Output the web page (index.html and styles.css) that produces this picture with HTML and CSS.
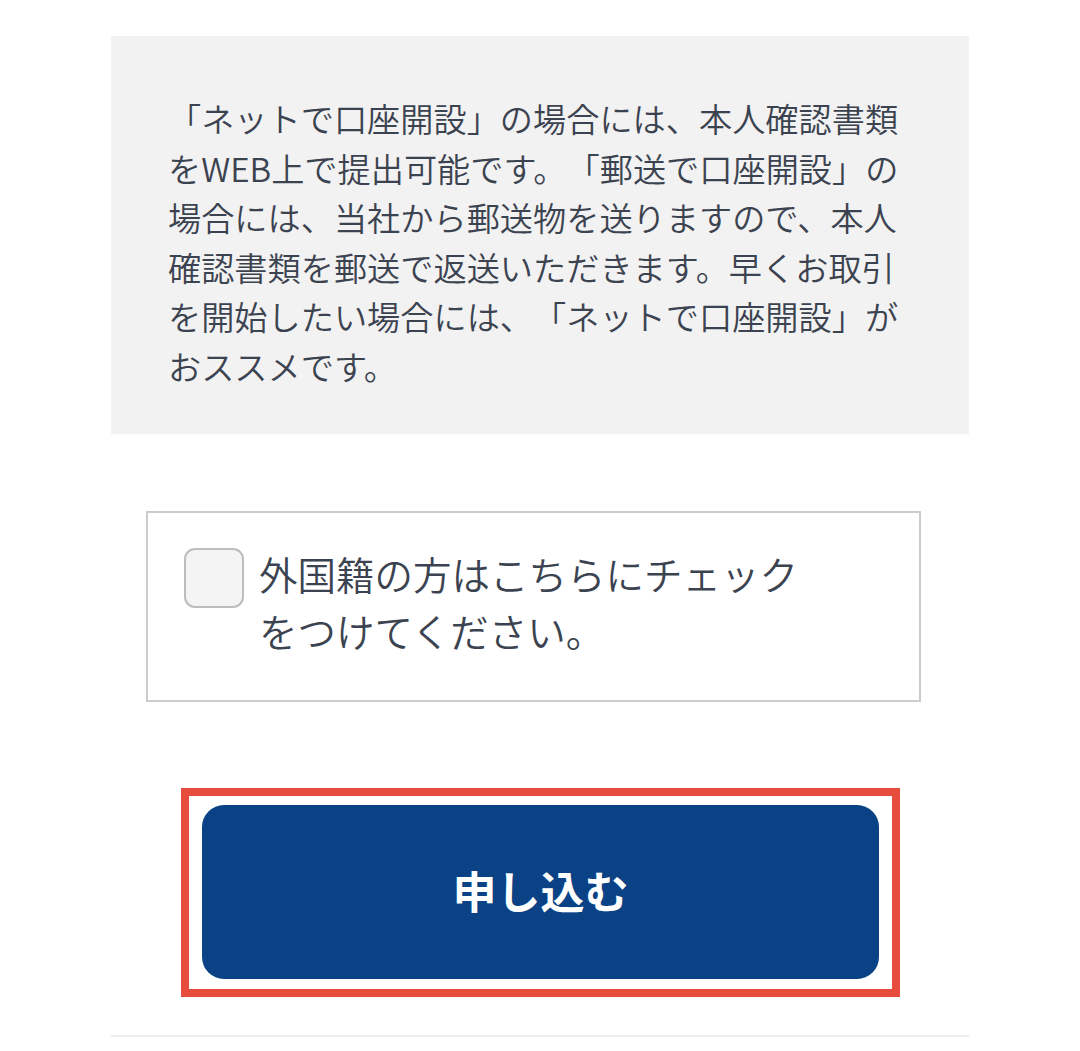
FILE: index.html
```html
<!DOCTYPE html>
<html lang="ja">
<head>
<meta charset="utf-8">
<title>口座開設</title>
<link rel="stylesheet" href="styles.css">
</head>
<body>
<main class="page">
  <section class="notice">
    <p class="notice-text">「ネットで口座開設」の場合には、本人確認書類<br>をWEB上で提出可能です。「郵送で口座開設」の<br>場合には、当社から郵送物を送りますので、本人<br>確認書類を郵送で返送いただきます。早くお取引<br>を開始したい場合には、「ネットで口座開設」が<br>おススメです。</p>
  </section>

  <label class="check-card">
    <input type="checkbox" class="check-box">
    <span class="check-text">外国籍の方はこちらにチェックをつけてください。</span>
  </label>

  <div class="highlight">
    <button type="button" class="apply-btn">申し込む</button>
  </div>

  <hr class="divider">
</main>
</body>
</html>
```

FILE: styles.css
```css
html, body {
  margin: 0;
  padding: 0;
  background: #ffffff;
}

body {
  font-family: "Noto Sans CJK JP", "Noto Sans", sans-serif;
  color: #3c4350;
  text-spacing-trim: space-all;
}

.page {
  width: 858px;
  margin: 0 auto;
  padding-top: 36px;
  display: flex;
  flex-direction: column;
}

.notice {
  background: #f2f2f2;
  padding: 57px 40px 41px 57px;
  height: 398px;
  box-sizing: border-box;
}

.notice-text {
  margin: 0;
  font-size: 33.2px;
  font-weight: 350;
  line-height: 49.5px;
  white-space: nowrap;
  text-spacing-trim: space-all;
}

.check-card {
  margin: 77px 0 0 35px;
  width: 775px;
  height: 191px;
  box-sizing: border-box;
  border: 2px solid #cccccc;
  padding: 35px 20px 0 36px;
  display: flex;
  align-items: flex-start;
  gap: 15px;
  cursor: pointer;
}

.check-box {
  appearance: none;
  -webkit-appearance: none;
  margin: 0;
  flex: 0 0 auto;
  width: 60px;
  height: 60px;
  box-sizing: border-box;
  border: 2px solid #bdbdbd;
  border-radius: 11px;
  background: #f4f4f4;
}

.check-text {
  font-size: 38.5px;
  font-weight: 350;
  line-height: 57px;
  max-width: 560px;
  margin-top: -3px;
}

.highlight {
  margin: 86px 0 0 70px;
  width: 719px;
  height: 209px;
  box-sizing: border-box;
  border: 8px solid #e84c3d;
  padding: 9px 13px 10px 13px;
  display: flex;
}

.apply-btn {
  flex: 1;
  border: none;
  border-radius: 22px;
  background: #0a4285;
  color: #ffffff;
  font-family: "Noto Sans CJK JP", "Noto Sans", sans-serif;
  font-weight: 700;
  font-size: 44px;
  line-height: 1;
  padding: 0 0 4px 0;
  cursor: pointer;
}

.divider {
  margin: 38px 0 0 0;
  border: none;
  height: 2px;
  background: #eeeeee;
}
```
